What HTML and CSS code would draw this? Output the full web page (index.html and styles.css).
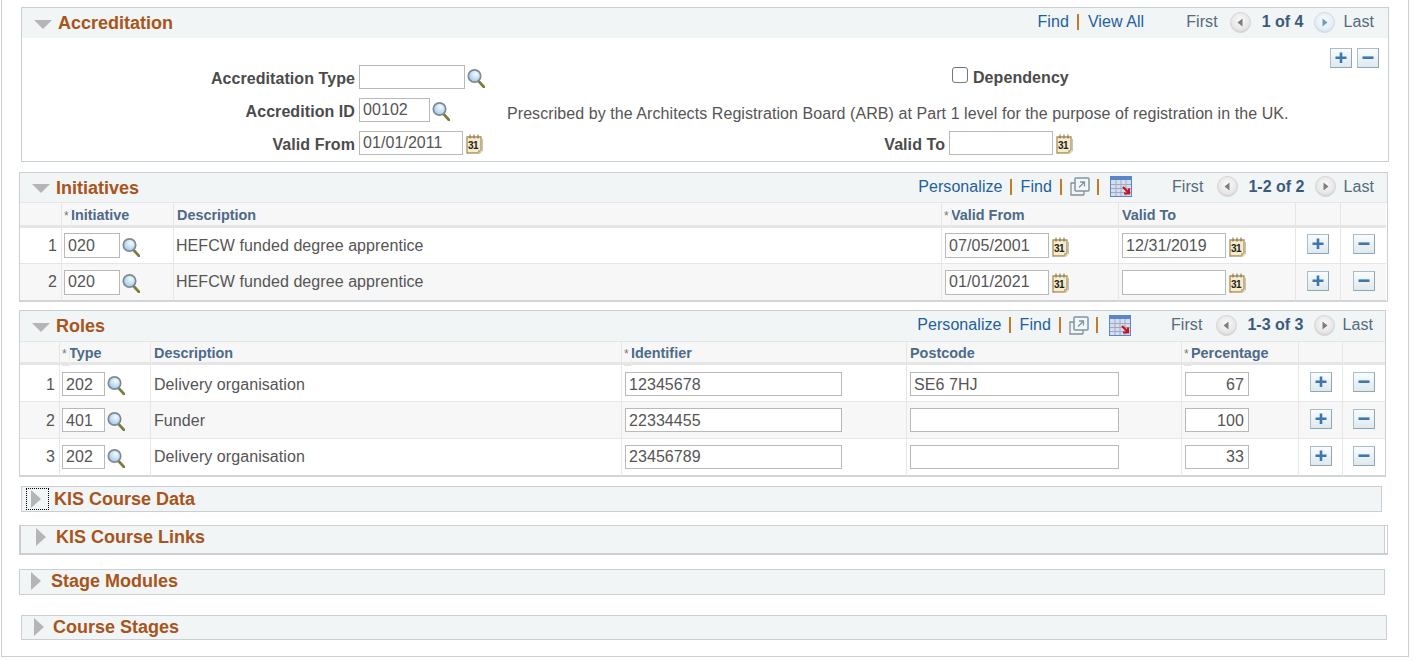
FILE: index.html
```html
<!DOCTYPE html>
<html lang="en">
<head>
<meta charset="utf-8">
<title>Accreditation</title>
<link rel="stylesheet" href="styles.css">
</head>
<body>
<svg class="defs" width="0" height="0" aria-hidden="true">
  <defs>
    <radialGradient id="lens" cx="0.6" cy="0.35" r="0.8"><stop offset="0" stop-color="#f4fbff"/><stop offset="0.6" stop-color="#b6d6f2"/><stop offset="1" stop-color="#8fb6d8"/></radialGradient>
    <radialGradient id="ball" cx="0.5" cy="0.4" r="0.65"><stop offset="0" stop-color="#fbfbfb"/><stop offset="0.7" stop-color="#e6e6e6"/><stop offset="1" stop-color="#c8c8c8"/></radialGradient>
    <radialGradient id="ballb" cx="0.5" cy="0.4" r="0.65"><stop offset="0" stop-color="#fafcfe"/><stop offset="0.7" stop-color="#e4edf5"/><stop offset="1" stop-color="#c7d6e4"/></radialGradient>
    <linearGradient id="btn" x1="0" y1="0" x2="0" y2="1"><stop offset="0" stop-color="#fbfdfe"/><stop offset="1" stop-color="#dde8ee"/></linearGradient>
    <symbol id="i-lookup" viewBox="0 0 18 20">
      <line x1="11.5" y1="13" x2="17" y2="19" stroke="#7b7d3c" stroke-width="2.6" stroke-linecap="round"/>
      <circle cx="7.5" cy="8" r="6.2" fill="url(#lens)" stroke="#7f8a90" stroke-width="1.7"/>
    </symbol>
    <symbol id="i-cal" viewBox="0 0 17 20">
      <path d="M1 3h14v13l-3 3H1z" fill="#f6eccb" stroke="#a8925c" stroke-width="1.3"/>
      <path d="M16.5 5v12l-3.500 3H3" fill="none" stroke="#c9c2ad" stroke-width="1"/>
      <path d="M12 19v-3h3z" fill="#c9b47c"/>
      <path d="M4 0.500v4M8 0.500v4M12 0.500v4" stroke="#7c6c44" stroke-width="1"/>
      <text x="2" y="14.500" class="cal-num">31</text>
    </symbol>
    <symbol id="i-add" viewBox="0 0 22 20">
      <rect x="0.500" y="0.500" width="21" height="19" fill="url(#btn)" stroke="#a9bec9"/>
      <path d="M0.500 19.500h21v-19" fill="none" stroke="#8ea7b3"/>
      <path d="M11 4.500v10.500M5.500 9.700h11" stroke="#3d76b0" stroke-width="2.600"/>
    </symbol>
    <symbol id="i-del" viewBox="0 0 22 20">
      <rect x="0.500" y="0.500" width="21" height="19" fill="url(#btn)" stroke="#a9bec9"/>
      <path d="M0.500 19.500h21v-19" fill="none" stroke="#8ea7b3"/>
      <path d="M5.500 9.700h11" stroke="#3d76b0" stroke-width="2.600"/>
    </symbol>
    <symbol id="i-prev" viewBox="0 0 21 21">
      <circle cx="10.500" cy="10.500" r="10" fill="url(#ball)" stroke="#d4d4d4"/>
      <path d="M12.500 6.500v8l-5-4z" fill="#7d7d7d"/>
    </symbol>
    <symbol id="i-next" viewBox="0 0 21 21">
      <circle cx="10.500" cy="10.500" r="10" fill="url(#ball)" stroke="#d4d4d4"/>
      <path d="M8.500 6.500v8l5-4z" fill="#7d7d7d"/>
    </symbol>
    <symbol id="i-nexta" viewBox="0 0 21 21">
      <circle cx="10.500" cy="10.500" r="10" fill="url(#ballb)" stroke="#cfdbe6"/>
      <path d="M8.500 6.500v8l5-4z" fill="#6f9ac4"/>
    </symbol>
    <symbol id="i-pop" viewBox="0 0 20 19">
      <path d="M1 5.500v12.500h13" fill="none" stroke="#8a8f94" stroke-width="1.300"/>
      <path d="M1 6h4M14 14v4" fill="none" stroke="#8a8f94" stroke-width="1.300"/>
      <rect x="5" y="1" width="14" height="13" rx="1" fill="#f4f7f8" stroke="#7f95a8" stroke-width="1.500"/>
      <path d="M9 10.500l5-5M10 5h4.500v4.500" fill="none" stroke="#7f95a8" stroke-width="1.300"/>
    </symbol>
    <symbol id="i-grid" viewBox="0 0 22 21">
      <rect x="0.500" y="0.500" width="21" height="20" fill="#d5def0" stroke="#5b85c9"/>
      <rect x="1" y="1" width="20" height="3" fill="#5b85c9"/>
      <path d="M6 4v16M11 4v16M16 4v16M1 8.500h20M1 12.500h20M1 16.500h20" stroke="#a3a9bf" stroke-width="1"/>
      <path d="M13 11l6 6M19 12.500v5h-5" fill="none" stroke="#c8141e" stroke-width="2.200"/>
    </symbol>
  </defs>
</svg>

<div class="frame">

  <section class="box box-acc">
    <header class="head head-acc">
      <span class="tri-down"></span>
      <h2 class="title">Accreditation</h2>
      <div class="pager">
        <a class="lnk">Find</a><span class="sep s-8"></span><a class="lnk m-9">View All</a>
        <span class="nav m-42">First</span>
        <svg class="ball m-12"><use href="#i-prev"/></svg>
        <span class="count m-11">1 of 4</span>
        <svg class="ball m-11"><use href="#i-nexta"/></svg>
        <span class="nav m-8">Last</span>
      </div>
    </header>
    <div class="acc-body">
      <div class="acc-grid">
        <label class="lab">Accreditation Type</label>
        <div class="val"><input class="in w-106" type="text"><svg class="lookup"><use href="#i-lookup"/></svg></div>
        <div class="dep"><input class="chk" type="checkbox"><span class="lab">Dependency</span></div>

        <label class="lab">Accredition ID</label>
        <div class="val"><input class="in w-71" type="text" value="00102"><svg class="lookup"><use href="#i-lookup"/></svg></div>
        <div class="desc">Prescribed by the Architects Registration Board (ARB) at Part 1 level for the purpose of registration in the UK.</div>

        <label class="lab">Valid From</label>
        <div class="val"><input class="in w-104" type="text" value="01/01/2011"><svg class="cal"><use href="#i-cal"/></svg></div>
        <label class="lab">Valid To</label>
        <div class="val"><input class="in w-104" type="text"><svg class="cal"><use href="#i-cal"/></svg></div>
      </div>
      <div class="acc-btns">
        <svg class="btn"><use href="#i-add"/></svg>
        <svg class="btn"><use href="#i-del"/></svg>
      </div>
    </div>
  </section>

  <section class="box box-ini">
    <header class="head">
      <span class="tri-down"></span>
      <h2 class="title">Initiatives</h2>
      <div class="pager">
        <a class="lnk">Personalize</a><span class="sep s-7"></span><a class="lnk m-9">Find</a><span class="sep s-8"></span>
        <svg class="pop m-8"><use href="#i-pop"/></svg><span class="sep s-7"></span>
        <svg class="grid m-11"><use href="#i-grid"/></svg>
        <span class="nav m-40">First</span>
        <svg class="ball m-14"><use href="#i-prev"/></svg>
        <span class="count m-10">1-2 of 2</span>
        <svg class="ball m-11"><use href="#i-next"/></svg>
        <span class="nav m-7">Last</span>
      </div>
    </header>
    <table class="tbl tbl-ini">
      <colgroup>
        <col class="c-42"><col class="c-112"><col class="c-768"><col class="c-177"><col class="c-177"><col class="c-45"><col class="c-45">
      </colgroup>
      <thead>
        <tr>
          <th></th><th class="req"><span class="star">*</span>Initiative</th><th>Description</th>
          <th class="req"><span class="star">*</span>Valid From</th><th>Valid To</th><th></th><th></th>
        </tr>
      </thead>
      <tbody>
        <tr>
          <td class="num">1</td>
          <td class="cell-in"><div class="val"><input class="in w-56" type="text" value="020"><svg class="lookup"><use href="#i-lookup"/></svg></div></td>
          <td>HEFCW funded degree apprentice</td>
          <td class="cell-in"><div class="val"><input class="in w-104" type="text" value="07/05/2001"><svg class="cal"><use href="#i-cal"/></svg></div></td>
          <td class="cell-in"><div class="val"><input class="in w-104" type="text" value="12/31/2019"><svg class="cal"><use href="#i-cal"/></svg></div></td>
          <td class="act"><svg class="btn"><use href="#i-add"/></svg></td>
          <td class="act"><svg class="btn"><use href="#i-del"/></svg></td>
        </tr>
        <tr class="alt">
          <td class="num">2</td>
          <td class="cell-in"><div class="val"><input class="in w-56" type="text" value="020"><svg class="lookup"><use href="#i-lookup"/></svg></div></td>
          <td>HEFCW funded degree apprentice</td>
          <td class="cell-in"><div class="val"><input class="in w-104" type="text" value="01/01/2021"><svg class="cal"><use href="#i-cal"/></svg></div></td>
          <td class="cell-in"><div class="val"><input class="in w-104" type="text"><svg class="cal"><use href="#i-cal"/></svg></div></td>
          <td class="act"><svg class="btn"><use href="#i-add"/></svg></td>
          <td class="act"><svg class="btn"><use href="#i-del"/></svg></td>
        </tr>
      </tbody>
    </table>
  </section>

  <section class="box box-rol">
    <header class="head head-rol">
      <span class="tri-down"></span>
      <h2 class="title">Roles</h2>
      <div class="pager">
        <a class="lnk">Personalize</a><span class="sep s-7"></span><a class="lnk m-9">Find</a><span class="sep s-8"></span>
        <svg class="pop m-8"><use href="#i-pop"/></svg><span class="sep s-7"></span>
        <svg class="grid m-11"><use href="#i-grid"/></svg>
        <span class="nav m-40">First</span>
        <svg class="ball m-14"><use href="#i-prev"/></svg>
        <span class="count m-10">1-3 of 3</span>
        <svg class="ball m-11"><use href="#i-next"/></svg>
        <span class="nav m-7">Last</span>
      </div>
    </header>
    <table class="tbl tbl-rol">
      <colgroup>
        <col class="c-40"><col class="c-91"><col class="c-471"><col class="c-285"><col class="c-275"><col class="c-117"><col class="c-44"><col class="c-42">
      </colgroup>
      <thead>
        <tr>
          <th></th><th class="req"><span class="star">*</span>Type</th><th>Description</th>
          <th class="req"><span class="star">*</span>Identifier</th><th>Postcode</th>
          <th class="req"><span class="star">*</span>Percentage</th><th></th><th></th>
        </tr>
      </thead>
      <tbody>
        <tr class="tall">
          <td class="num">1</td>
          <td class="cell-in"><div class="val"><input class="in w-43" type="text" value="202"><svg class="lookup"><use href="#i-lookup"/></svg></div></td>
          <td>Delivery organisation</td>
          <td class="cell-in"><input class="in w-217" type="text" value="12345678"></td>
          <td class="cell-in"><input class="in w-209" type="text" value="SE6 7HJ"></td>
          <td class="cell-in"><input class="in w-64 right" type="text" value="67"></td>
          <td class="act"><svg class="btn"><use href="#i-add"/></svg></td>
          <td class="act"><svg class="btn"><use href="#i-del"/></svg></td>
        </tr>
        <tr class="alt tall">
          <td class="num">2</td>
          <td class="cell-in"><div class="val"><input class="in w-43" type="text" value="401"><svg class="lookup"><use href="#i-lookup"/></svg></div></td>
          <td>Funder</td>
          <td class="cell-in"><input class="in w-217" type="text" value="22334455"></td>
          <td class="cell-in"><input class="in w-209" type="text"></td>
          <td class="cell-in"><input class="in w-64 right" type="text" value="100"></td>
          <td class="act"><svg class="btn"><use href="#i-add"/></svg></td>
          <td class="act"><svg class="btn"><use href="#i-del"/></svg></td>
        </tr>
        <tr>
          <td class="num">3</td>
          <td class="cell-in"><div class="val"><input class="in w-43" type="text" value="202"><svg class="lookup"><use href="#i-lookup"/></svg></div></td>
          <td>Delivery organisation</td>
          <td class="cell-in"><input class="in w-217" type="text" value="23456789"></td>
          <td class="cell-in"><input class="in w-209" type="text"></td>
          <td class="cell-in"><input class="in w-64 right" type="text" value="33"></td>
          <td class="act"><svg class="btn"><use href="#i-add"/></svg></td>
          <td class="act"><svg class="btn"><use href="#i-del"/></svg></td>
        </tr>
      </tbody>
    </table>
  </section>

  <section class="fold fold-data">
    <span class="focus"><span class="tri-right"></span></span>
    <h2 class="title">KIS Course Data</h2>
  </section>

  <section class="fold fold-links">
    <span class="tri-right"></span>
    <h2 class="title">KIS Course Links</h2>
  </section>

  <section class="fold fold-mods">
    <span class="tri-right"></span>
    <h2 class="title">Stage Modules</h2>
  </section>

  <section class="fold fold-stages">
    <span class="tri-right"></span>
    <h2 class="title">Course Stages</h2>
  </section>

</div>
</body>
</html>
```

FILE: styles.css
```css
* { box-sizing: border-box; }
html, body { margin: 0; padding: 0; background: #fff; }
body {
  font-family: "Liberation Sans", Arial, sans-serif;
  font-size: 16px;
  letter-spacing: 0.07px;
  color: #555;
  overflow: hidden;
}
.defs { position: absolute; }
.cal-num { font: bold 10px "Liberation Sans", Arial, sans-serif; letter-spacing: -0.5px; fill: #222; }

.frame {
  width: 1408px;
  height: 657px;
  margin-left: 1px;
  padding-top: 7px;
  border: 1px solid #cbcfd4;
  border-top: 0;
}

/* section boxes */
.box { border: 1px solid #cbcfd4; background: #fff; }
.box-acc { width: 1368px; height: 155px; margin-left: 19px; }
.box-ini { width: 1369px; height: 130px; margin: 10px 0 0 17px; }
.box-rol { width: 1367px; height: 167px; margin: 8px 0 0 17px; }

.head {
  display: flex;
  align-items: center;
  height: 30px;
  padding-left: 12px;
  padding-right: 13px;
  background: #f1f5f6;
  border-bottom: 1px solid #e4e7e9;
}
.head-acc { height: 30px; padding-right: 14px; border-bottom: 0; }
.head-rol { height: 31px; padding-right: 12px; }

.title {
  margin: 0 0 0 6px;
  font-size: 18px;
  line-height: 20px;
  font-weight: bold;
  letter-spacing: 0;
  color: #a8541a;
}
.tri-down {
  width: 0;
  height: 0;
  border-left: 9px solid transparent;
  border-right: 9px solid transparent;
  border-top: 9px solid #b5b5b5;
  margin-top: 2px;
}
.tri-right {
  display: block;
  width: 0;
  height: 0;
  border-top: 9px solid transparent;
  border-bottom: 9px solid transparent;
  border-left: 10px solid #b5b5b5;
}

/* pager */
.pager { display: flex; align-items: center; margin: 0 0 2px auto; height: 22px; }
.lnk { color: #1f5f9e; }
.nav { color: #566a7c; }
.count { color: #3c5a7c; font-weight: bold; letter-spacing: 0; }
.sep { display: block; width: 2px; height: 16px; background: #c67a26; }
.s-8 { margin-left: 8px; }
.s-7 { margin-left: 7px; }
.m-7 { margin-left: 7px; }
.m-8 { margin-left: 8px; }
.m-9 { margin-left: 9px; }
.m-10 { margin-left: 10px; }
.m-11 { margin-left: 11px; }
.m-12 { margin-left: 12px; }
.m-14 { margin-left: 14px; }
.m-40 { margin-left: 40px; }
.m-42 { margin-left: 42px; }
.ball { width: 21px; height: 21px; display: block; }
.pop { width: 20px; height: 19px; display: block; }
.grid { width: 22px; height: 21px; display: block; }

/* accreditation body */
.acc-body { display: flex; justify-content: space-between; height: 123px; }
.acc-grid {
  display: grid;
  grid-template-columns: 337px 148px 442px 300px;
  grid-auto-rows: 24px;
  row-gap: 9px;
  align-items: center;
  padding-top: 27px;
}
.lab { font-weight: bold; color: #4b4b4b; text-align: right; padding: 4px 4px 0 0; }
.dep { grid-column: 3 / 5; display: flex; align-items: center; padding: 2px 0 0 445px; white-space: nowrap; }
.desc { grid-column: 3 / 5; padding-top: 8px; white-space: nowrap; }
.chk {
  appearance: none;
  width: 16px;
  height: 16px;
  margin: -6px 5px 0 0;
  border: 1px solid #767676;
  border-radius: 3px;
  background: #fff;
}
.dep .lab { padding: 0; }
.acc-btns { display: flex; gap: 5px; padding: 10px 9px 0 0; height: 30px; }

/* fields */
.val { display: flex; align-items: center; }
.in {
  display: block;
  height: 24px;
  padding: 0 4px 0 3px;
  border: 1px solid #b9b9b9;
  background: #fff;
  font: 16px "Liberation Sans", Arial, sans-serif;
  letter-spacing: 0.07px;
  color: #555;
  border-radius: 0;
  outline: none;
}
.tbl-ini .in { height: 25px; }
.right { text-align: right; }
.w-43 { width: 43px; }
.w-56 { width: 56px; }
.w-64 { width: 64px; }
.w-71 { width: 71px; }
.w-104 { width: 104px; }
.w-106 { width: 106px; }
.w-209 { width: 209px; }
.w-217 { width: 217px; }
.lookup { display: block; width: 18px; height: 20px; margin: 2px 0 0 2px; flex: none; }
.cal { display: block; width: 17px; height: 20px; margin: 2px 0 0 3px; flex: none; }
.btn { display: block; width: 22px; height: 20px; }

/* grids */
.tbl { border-collapse: separate; border-spacing: 0; table-layout: fixed; }
.tbl-ini { width: 1366px; }
.tbl-rol { width: 1365px; }
.c-40 { width: 40px; }
.c-42 { width: 42px; }
.c-44 { width: 44px; }
.c-45 { width: 45px; }
.c-91 { width: 91px; }
.c-112 { width: 112px; }
.c-117 { width: 117px; }
.c-177 { width: 177px; }
.c-275 { width: 275px; }
.c-285 { width: 285px; }
.c-471 { width: 471px; }
.c-768 { width: 768px; }
.tbl th {
  height: 25px;
  padding: 1px 0 0 3px;
  font-size: 14.4px;
  line-height: 16px;
  font-weight: bold;
  letter-spacing: 0;
  text-align: left;
  color: #4d6a8a;
  background: #f7f7f7;
  border-right: 1px solid #e6e6e6;
  border-bottom: 3px solid #e6e6e6;
}
.tbl-rol th { height: 23px; padding-top: 2px; }
.tbl th:last-child, .tbl td:last-child { border-right: 0; }
.tbl th.req { padding-left: 2px; }
.star {
  position: relative;
  display: inline-block;
  width: 7px;
  height: 10px;
  line-height: 10px;
  font-size: 12px;
  font-weight: normal;
  color: #777;
}
.star::after {
  content: "";
  position: absolute;
  left: 0;
  top: -3px;
  width: 7px;
  height: 19px;
  border-right: 1px solid #eee;
  border-bottom: 1px solid #e4e4e4;
}
.tbl td {
  height: 36px;
  padding: 0 0 0 3px;
  font-size: 16px;
  color: #555;
  background: #fff;
  border-right: 1px solid #e6e6e6;
  border-bottom: 1px solid #e6e6e6;
  vertical-align: middle;
}
.tbl tr:last-child td { border-bottom: 2px solid #d2d5d8; height: 38px; }
.tbl tr.alt td { background: #f7f7f7; }
.tbl tr.tall td { height: 37px; }
.tbl td.num { text-align: right; padding: 0 4px 0 0; }
.tbl td.num + td { padding-left: 2px; }
.tbl td.act { padding: 0 0 3px; }
.tbl td.act .btn { margin: 0 auto; }
.tbl-ini td:nth-child(3) { padding-left: 2px; }
.tbl-rol tbody tr:first-child td { padding-top: 1px; }
.tbl-rol tr.tall .in { padding-top: 2px; }
.tbl-rol tr.tall td:not(.act):not(.cell-in) { padding-top: 2px; }
.tbl-rol tbody tr.tall:first-child td:not(.act):not(.cell-in) { padding-top: 3px; }

/* collapsed sections */
.fold {
  display: flex;
  align-items: center;
  background: #f1f5f6;
  border: 1px solid #cbcfd4;
}
.fold-data { width: 1361px; height: 26px; margin: 9px 0 0 19px; padding-left: 4px; }
.fold-links {
  width: 1369px;
  height: 30px;
  margin: 13px 0 0 17px;
  padding: 0 0 5px 15px;
  border-left-width: 2px;
  border-bottom-width: 2px;
  box-shadow: inset -2px 0 0 #fff, inset -3px 0 0 #cbcfd4;
}
.fold-links .title { margin-left: 10px; }
.fold-mods { width: 1366px; height: 26px; margin: 14px 0 0 17px; padding: 0 0 2px 11px; }
.fold-mods .title { margin-left: 10px; }
.fold-stages { width: 1366px; height: 25px; margin: 20px 0 0 19px; padding: 0 0 2px 12px; }
.fold-stages .title { margin-left: 9px; }
.focus {
  display: flex;
  align-items: center;
  justify-content: center;
  width: 23px;
  height: 22px;
  padding-right: 3px;
  outline: 1px dotted #000;
  outline-offset: -1px;
}
.fold-data .title { margin-left: 5px; }
```
